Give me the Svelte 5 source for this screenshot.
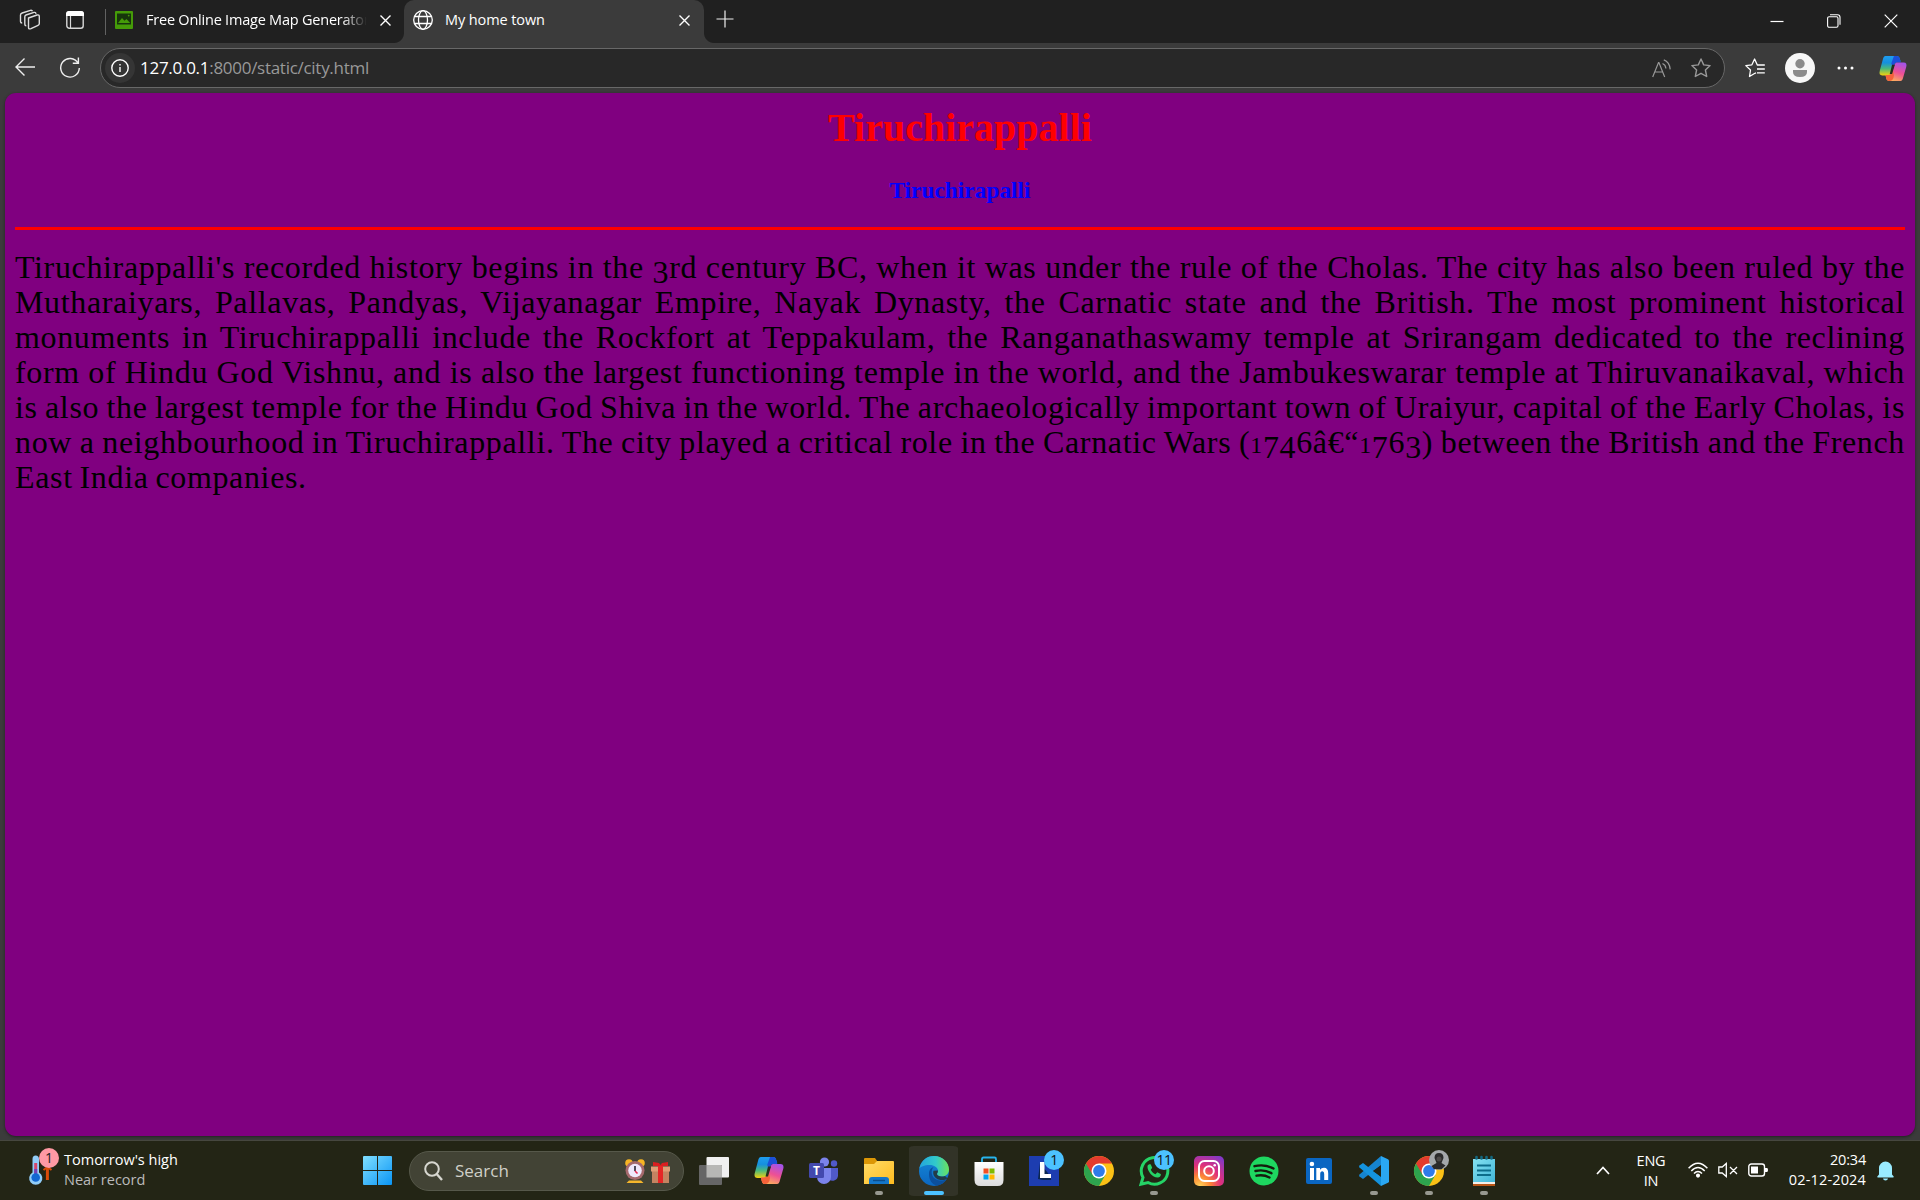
<script>
  const lines = [
    "Tiruchirappalli's recorded history begins in the 3rd century BC, when it was under the rule of the Cholas. The city has also been ruled by the",
    'Mutharaiyars, Pallavas, Pandyas, Vijayanagar Empire, Nayak Dynasty, the Carnatic state and the British. The most prominent historical',
    'monuments in Tiruchirappalli include the Rockfort at Teppakulam, the Ranganathaswamy temple at Srirangam dedicated to the reclining',
    'form of Hindu God Vishnu, and is also the largest functioning temple in the world, and the Jambukeswarar temple at Thiruvanaikaval, which',
    'is also the largest temple for the Hindu God Shiva in the world. The archaeologically important town of Uraiyur, capital of the Early Cholas, is',
    'now a neighbourhood in Tiruchirappalli. The city played a critical role in the Carnatic Wars (1746â€“1763) between the British and the French',
    'East India companies.'
  ];
  // Split digits out of each line so they can be set as old-style figures.
  const pieces = (line) => line.split(/(\d)/).filter((p) => p !== '');
  const figure = (p) => (p === '1' ? 'fig small' : /^[3457]$/.test(p) ? 'fig low' : 'fig');

  const apps = [
    { id: 'tasks' }, { id: 'copilot' }, { id: 'teams' }, { id: 'files', run: true },
    { id: 'edge', active: true }, { id: 'store' }, { id: 'l', badge: '1' }, { id: 'chrome' },
    { id: 'whatsapp', badge: '11', run: true }, { id: 'insta' }, { id: 'spotify' }, { id: 'linkedin' },
    { id: 'code', run: true }, { id: 'chrome2', run: true }, { id: 'notes', run: true }
  ];
</script>

<svelte:head><title>My home town</title></svelte:head>

{#snippet copilot()}
  <path d="M7 2h12c2 0 2.700 1 3.300 3l1 3h-3.500c-2 0-3 1-3.600 3l-2.800 9c-.7 2-1.600 3-3.600 3H3.500C.7 23 0 21 .8 18L4 6c.6-2.500 1.300-4 3-4z" transform="translate(0 -1)" fill="url(#cpA)" />
  <path d="M16 1h3c2 0 2.700 1 3.300 3l1 4h-3.500c-2 0-3 1-3.600 3l-1 3-2-5z" fill="#1c4fd8" />
  <path d="M23 28H11c-2 0-2.700-1-3.300-3L7 21.500h3.200c2 0 3-1 3.600-3l2.800-8C17.300 8.500 18.200 8 20 8h6.500c2.800 0 3.500 2 2.700 5L26 24c-.6 2.500-1.300 4-3 4z" fill="url(#cpB)" />
  <path d="M7 21.500h3.200c2 0 3-1 3.600-3l1-3L16 22c-.5 4-2 6-5 6-2 0-2.700-1-3.300-3z" fill="#f4623a" />
  <path d="M14 10.500h3l-3 10h-2.500z" fill="#24301d" />
{/snippet}

{#snippet chrome()}
  <circle cx="15" cy="15" r="15" fill="#fbc116" />
  <path d="M15 15 2 7.500A15 15 0 0 1 28 7.500H15z" fill="#e33b2e" />
  <path d="M2 7.500A15 15 0 0 0 15 30l6.500-11.200L15 15z" fill="#2da44e" />
  <path d="M2 7.500 8.500 18.800 15 7.500z" fill="#e33b2e" />
  <circle cx="15" cy="15" r="7.500" fill="#fff" />
  <circle cx="15" cy="15" r="5.900" fill="#2f7bea" />
{/snippet}

<svg class="defs" width="0" height="0" aria-hidden="true">
  <defs>
    <linearGradient id="cpA" x1="0" y1="0" x2="0" y2="1"><stop offset="0" stop-color="#1f9df0" /><stop offset=".35" stop-color="#1590df" /><stop offset=".65" stop-color="#4bb97a" /><stop offset="1" stop-color="#f5d10c" /></linearGradient>
    <linearGradient id="cpB" x1=".7" y1="0" x2=".3" y2="1"><stop offset="0" stop-color="#a453e8" /><stop offset=".5" stop-color="#ee5094" /><stop offset="1" stop-color="#fdb45a" /></linearGradient>
    <linearGradient id="win" x1="0" y1="0" x2="1" y2="1"><stop offset="0" stop-color="#80dfff" /><stop offset="1" stop-color="#0a95f5" /></linearGradient>
    <linearGradient id="fold" x1="0" y1="0" x2="1" y2="1"><stop offset="0" stop-color="#ffdc68" /><stop offset="1" stop-color="#ffbc1f" /></linearGradient>
    <linearGradient id="edA" x1="0" y1=".5" x2="1" y2=".5"><stop offset="0" stop-color="#24a5dd" /><stop offset=".55" stop-color="#31c9cb" /><stop offset="1" stop-color="#6be35b" /></linearGradient>
    <linearGradient id="edB" x1="0" y1="0" x2="0" y2="1"><stop offset="0" stop-color="#1689d8" /><stop offset="1" stop-color="#0b66c0" /></linearGradient>
    <radialGradient id="ig" cx=".2" cy="1" r="1.15"><stop offset="0" stop-color="#ffd35a" /><stop offset=".3" stop-color="#fc8434" /><stop offset=".6" stop-color="#e1307a" /><stop offset="1" stop-color="#8538c6" /></radialGradient>
    <linearGradient id="store" x1="0" y1="0" x2="0" y2="1"><stop offset="0" stop-color="#fff" /><stop offset="1" stop-color="#dcdcdc" /></linearGradient>
    <linearGradient id="note" x1="0" y1="0" x2="1" y2="1"><stop offset="0" stop-color="#86e2f2" /><stop offset="1" stop-color="#40b6d8" /></linearGradient>
  </defs>
</svg>

<div class="screen">
  <header class="tabs">
    <div class="lead">
      <svg width="22" height="22" viewBox="0 0 22 22" fill="none" stroke="#ddd" stroke-width="1.400" stroke-linejoin="round"><path d="m9.500 9 8.500-3q2.300-.6 2.300 1.500v7q0 1.400-1.300 1.900l-7 3.200q-2.500 1-2.500-1.200z" /><path d="M17 4.800q-.3-1.800-2-1.400L7 6q-1.200.4-1.200 1.800v7.500q0 1.500 1.500 1.500M13.500 2.300q-.6-1.500-2.100-1L3.200 4Q1.500 4.600 1.500 6v6.500Q1.500 14 3.200 14" /></svg>
      <svg width="18" height="18" viewBox="0 0 18 18"><rect x=".8" y=".8" width="16.400" height="16.400" rx="2.500" fill="none" stroke="#d8d8d8" stroke-width="1.400" /><path d="M0 5V3Q0 0 3 0h12q3 0 3 3v2z" fill="#fff" /><path d="M4.500 5v12" stroke="#d8d8d8" stroke-width="1.200" /></svg>
    </div>
    <div class="tab idle">
      <svg width="18" height="18" viewBox="0 0 18 18"><rect width="18" height="18" rx="1" fill="#459b08" /><path d="M2 2.500h14v11H2z" fill="#17350c" /><path d="m3 12 4-5 2.500 2.700L11.500 8l3.700 4z" fill="#459b08" /><circle cx="13.700" cy="4.600" r=".9" fill="#459b08" /></svg>
      <span class="label first">Free Online Image Map Generator</span>
      <svg class="x" width="11" height="11" viewBox="0 0 11 11"><path d="m.5.5 10 10m0-10-10 10" stroke="#fff" stroke-width="1.400" /></svg>
    </div>
    <div class="tab current">
      <svg width="20" height="20" viewBox="0 0 20 20" fill="none" stroke="#fff" stroke-width="1.300"><circle cx="10" cy="10" r="9.300" /><ellipse cx="10" cy="10" rx="4.500" ry="9.300" /><path d="M1.500 6.500h17m-17 7h17" /></svg>
      <span class="label second">My home town</span>
      <svg class="x" width="11" height="11" viewBox="0 0 11 11"><path d="m.5.5 10 10m0-10-10 10" stroke="#fff" stroke-width="1.400" /></svg>
    </div>
    <svg class="plus" width="18" height="18" viewBox="0 0 18 18"><path d="M9 .5v17M.5 9h17" stroke="#eee" stroke-width="1.200" /></svg>
    <div class="window">
      <svg width="14" height="14" viewBox="0 0 14 14"><path d="M.5 7.500h13" stroke="#fff" stroke-width="1.200" /></svg>
      <svg width="14" height="14" viewBox="0 0 14 14" fill="none" stroke="#fff" stroke-width="1.100"><rect x=".6" y="2.800" width="10.400" height="10.400" rx="1.500" /><path d="M3 .8h7.500q2.500 0 2.500 2.500v7.500" /></svg>
      <svg width="14" height="14" viewBox="0 0 14 14"><path d="m.7.7 12.600 12.600m0-12.600L.7 13.300" stroke="#fff" stroke-width="1.200" /></svg>
    </div>
  </header>

  <nav class="bar">
    <svg class="back" width="20" height="18" viewBox="0 0 20 18" fill="none" stroke="#eee" stroke-width="1.400"><path d="M20 9H1M9.500.5 1 9l8.500 8.500" /></svg>
    <svg class="reload" width="20" height="21" viewBox="0 0 20 21" fill="none" stroke="#eee" stroke-width="1.400"><path d="M19.300 11A9.300 9.300 0 1 1 18 6M12.800 6.300H18.400V.5" /></svg>
    <div class="address">
      <span class="info"><svg width="18" height="18" viewBox="0 0 18 18" fill="none" stroke="#fff" stroke-width="1.400"><circle cx="9" cy="9" r="8.200" /><path d="M9 8v5M9 5v1.500" /></svg></span>
      <span class="url"><b>127.0.0.1</b>:8000/static/city.html</span>
      <svg class="read" width="20" height="19" viewBox="0 0 20 19" fill="none" stroke="#999" stroke-width="1.200"><path d="M.7 18 6.500 3.500h.4L12.700 18M2.800 13h7.800M10.500 4.500q3.200 1.300 3.400 5M11.800.9q5.800 2.200 6.400 9.500" /></svg>
      <svg class="star" width="20" height="20" viewBox="0 0 20 20" fill="none" stroke="#999" stroke-width="1.400" stroke-linejoin="round"><path d="m10 1 2.700 5.900 6.400.7-4.700 4.400 1.300 6.500L10 15.300l-5.700 3.200 1.300-6.500L.9 7.600l6.400-.7z" /></svg>
    </div>
    <svg class="favs" width="20" height="20" viewBox="0 0 20 20" fill="none" stroke="#fff" stroke-width="1.300" stroke-linejoin="round"><path d="M11 14.800 9.500 15.500 4.500 18.500l1-6.500L.8 7.600l6.100-.8L9.600 1l2.700 6h7.500M12 11h7.800M12 14.800h7.800" /></svg>
    <svg class="avatar" width="30" height="30" viewBox="0 0 30 30"><circle cx="15" cy="15" r="15" fill="#f7f7f7" /><circle cx="15" cy="10.700" r="4.700" fill="#8b8b8b" /><path d="M8 17h14v2q0 5-7 5t-7-5z" fill="#8b8b8b" /></svg>
    <svg class="dots" width="18" height="4" viewBox="0 0 18 4" fill="#fff"><circle cx="2" cy="2" r="1.500" /><circle cx="8.500" cy="2" r="1.500" /><circle cx="15" cy="2" r="1.500" /></svg>
    <svg class="cp" width="28" height="27" viewBox="0 0 30 29">{@render copilot()}</svg>
  </nav>

  <main>
    <article>
      <h1>Tiruchirappalli</h1>
      <h3>Tiruchirapalli</h3>
      <hr />
      <p>
        {#each lines as line, i}
          <span class="line" class:last={i === lines.length - 1}>{#each pieces(line) as p}{#if /^\d$/.test(p)}<span class={figure(p)}>{p}</span>{:else}{p}{/if}{/each}</span>
        {/each}
      </p>
    </article>
  </main>

  <footer>
    <div class="weather">
      <svg width="31" height="38" viewBox="0 0 31 38"><path d="M3.500 11q0-3.500 3.200-3.500T10 11v13.500a6.600 6.600 0 1 1-6.500 0z" fill="#91cdf8" /><path d="M6.700 15v13" stroke="#d6466b" stroke-width="3" /><path d="M6.700 21v8" stroke="#7040b8" stroke-width="3" /><circle cx="6.700" cy="29.500" r="4.300" fill="#1267d2" /><path d="M18.400 19v13" stroke="#da4b08" stroke-width="3" /><path d="m14.500 22 4-3 4 3" fill="none" stroke="#da4b08" stroke-width="2" /><circle cx="20" cy="10" r="10" fill="#ff99a4" /><text x="20" y="15" text-anchor="middle" font-size="14" fill="#222">1</text></svg>
      <div class="report"><span>Tomorrow's high</span><span class="dim">Near record</span></div>
    </div>
    <svg class="start" width="29" height="29" viewBox="0 0 29 29"><path d="M1 0h13v14H0V1q0-1 1-1zM15 0h13q1 0 1 1v13H15zM0 15h14v14H1q-1 0-1-1zM15 15h14v13q0 1-1 1H15z" fill="url(#win)" /></svg>
    <div class="search">
      <svg width="19" height="20" viewBox="0 0 19 20" fill="none" stroke="#d7d7d0" stroke-width="2"><circle cx="8" cy="8" r="6.800" /><path d="m12.700 13 5.300 6" stroke-width="2.400" /></svg>
      <span>Search</span>
      <svg class="gift" width="45" height="26" viewBox="0 0 45 26">
        <path d="M4 22.500 1.500 25h17L16 22.500z" fill="#f5b62c" /><circle cx="4" cy="5" r="3.800" fill="#f7b524" /><circle cx="16" cy="5" r="3.800" fill="#f7b524" /><circle cx="10" cy="12.500" r="9.500" fill="#a5696d" /><circle cx="10" cy="12.500" r="6.800" fill="#efe8fc" /><path d="M10 8v5" stroke="#292536" stroke-width="1.600" /><path d="m10 13 2.500 2.500" stroke="#e82953" stroke-width="1.600" />
        <path d="M27 12h17v13H27z" fill="#c48361" /><path d="M26 8.500h19v5H26z" fill="#df9d76" /><path d="M33 7h5v18h-5z" fill="#e52626" /><path d="m28 4 6 1 1.500 2L37 5l6-1v4H28z" fill="#d91e20" />
      </svg>
    </div>
    <div class="apps">
      {#each apps as a}
        <div class="cell" class:active={a.active}>
          <svg width="30" height="30" viewBox="0 0 30 30">
            {#if a.id === 'tasks'}
              <rect x="7.500" y="1" width="22.500" height="20.500" rx="1" fill="#f0f0f0" /><rect y="9" width="23" height="20" rx="1" fill="#666" /><path d="M7.500 9H22q1 0 1 1v11.500H7.500z" fill="#b7b7b5" />
            {:else if a.id === 'copilot'}
              {@render copilot()}
            {:else if a.id === 'teams'}
              <circle cx="15.500" cy="6" r="4.600" fill="#7b83eb" /><circle cx="25" cy="7.500" r="3.200" fill="#5059c9" /><path d="M20 12h9v7.500a5.500 5.500 0 0 1-9 4z" fill="#5059c9" /><path d="M8 12h14v9a7 7 0 0 1-14 0z" fill="#7b83eb" /><rect y="7" width="15" height="15" rx="1.500" fill="#4349ae" /><text x="7.500" y="19" text-anchor="middle" font-size="12" font-weight="700" fill="#fff">T</text>
            {:else if a.id === 'files'}
              <path d="M0 3q0-1 1-1h10l2.500 3.500L11 9H0z" fill="#dc9706" /><path d="M0 8h10l3-3h16q1 0 1 1v22H0z" fill="url(#fold)" /><path d="M5 28v-4q0-3 3-3h14q3 0 3 3v4z" fill="#1476c9" /><path d="M9 24.500h12" stroke="#0a4c8c" stroke-width="1.400" />
            {:else if a.id === 'edge'}
              <circle cx="15" cy="15" r="15" fill="url(#edB)" /><path d="M.3 12.500C2 4.500 8 0 15 0c9 0 15 6.500 15 13.500 0 4-3 7-7 7-3 0-5-1.300-5-2.500 0-.8 1-1.300 1-3.200 0-3.300-4-5.800-8.300-5.800C5 9 1.500 11 .3 12.500z" fill="url(#edA)" /><path d="M10 18c0-4 2-6.500 4.500-6.500-3 2-3.200 12 6.500 13 3 .3 5.300-.7 7-1.500A15 15 0 0 1 18 29.700C13 28.500 10 24 10 18z" fill="#0b4f9d" /><path d="M19 14.500c0 2-1 2.500-1 3.500 0 1.300 2 2.500 5 2.500 1 0 2-.2 3-.6l2.500 2.300c-2 1.600-5 2.300-8 1.600-5-1.200-7.200-5.500-6-9z" fill="#292a1e" opacity=".75" />
            {:else if a.id === 'store'}
              <path d="M8 7V3q0-1.500 1.500-1.500h11Q22 1.500 22 3v4" fill="none" stroke="#27b4ec" stroke-width="1.800" /><path d="M.5 6h29v18q0 6-6 6h-17q-6 0-6-6z" fill="url(#store)" /><path d="M9.500 12.500h5v5h-5z" fill="#f25022" /><path d="M15.500 12.500h5v5h-5z" fill="#7fba00" /><path d="M9.500 18.500h5v5h-5z" fill="#00a4ef" /><path d="M15.500 18.500h5v5h-5z" fill="#ffb900" />
            {:else if a.id === 'l'}
              <path d="M0 0h30v30H0z" fill="#1d3db0" /><path d="m11 7-2 16 5 1h8v-3z" fill="#0b2750" /><path d="M11 6h4.500v12H22v4H11z" fill="#fff" />
            {:else if a.id === 'chrome'}
              {@render chrome()}
            {:else if a.id === 'whatsapp'}
              <path d="M2 28.200 4 21.500A13.300 13.300 0 1 1 9 26.500z" fill="none" stroke="#25d366" stroke-width="3" /><path d="M8.500 10c.5-1.700 2.500-2.300 3.300-1.500l1.400 3.200-1.400 2c1 2 2.500 3.500 4.700 4.500l1.800-2 3.400 1.700c.7 1.500-1.200 3.600-3.200 3.700C13.500 21.500 8 15 8.500 10z" fill="#25d366" />
            {:else if a.id === 'insta'}
              <rect width="30" height="30" rx="5" fill="url(#ig)" /><rect x="5" y="5" width="20" height="20" rx="5.500" fill="none" stroke="#fff" stroke-width="2" /><circle cx="15" cy="15" r="4.800" fill="none" stroke="#fff" stroke-width="2" /><circle cx="20.700" cy="9.300" r="1.300" fill="#fff" />
            {:else if a.id === 'spotify'}
              <circle cx="15" cy="15" r="14.500" fill="#1ed760" /><path d="M5.500 10.200q10-2.500 19 2.300M6.500 15q8.500-2 16 2.200M7.500 19.700q7-1.500 13 1.800" fill="none" stroke="#151d0d" stroke-width="2.400" stroke-linecap="round" />
            {:else if a.id === 'linkedin'}
              <rect x="2" y="2" width="26" height="26" rx="2" fill="#0a66c2" /><circle cx="7.900" cy="8" r="2.300" fill="#fff" /><path d="M6 12h4v12H6zM12.300 12H16v1.700q1.300-2 4-2 4.200 0 4.200 5.500V24h-4v-6q0-2.800-1.800-2.800-2.200 0-2.200 2.800v6h-3.900z" fill="#fff" />
            {:else if a.id === 'code'}
              <path d="m22 0 2 7.500L4 23 .5 20.500q-.9-1 0-2z" fill="#1684cf" /><path d="m22 30 2-7.500L4 7 .5 9.500q-.9 1 0 2z" fill="#1493df" /><path d="m22 0 7 3.200q1 .5 1 1.600v20.400q0 1.100-1 1.600L22 30z" fill="#2aa7f2" /><path d="M22 9.500 14 15l8 5.500z" fill="#222416" />
            {:else if a.id === 'chrome2'}
              {@render chrome()}
            {:else}
              <path d="M4 25h22v5H4z" fill="#b95516" /><path d="M4 25h22v3H4z" fill="#f4eee7" /><path d="M4 3h22v23H4z" fill="url(#note)" /><path d="M8 9.500h14M8 14.500h14M8 19h14" stroke="#0c6d8b" stroke-width="1.900" /><path d="M7.500 1v1.500M12.500 1v1.500M17.500 1v1.500M22.500 1v1.500" stroke="#126880" stroke-width="2.600" stroke-linecap="round" />
            {/if}
          </svg>
          {#if a.badge}<span class="badge">{a.badge}</span>{/if}
          {#if a.id === 'chrome2'}
            <svg class="badge" width="20" height="20" viewBox="0 0 20 20"><circle cx="10" cy="10" r="10" fill="#a4a8aa" /><path d="M5.500 8q0-5 4.500-5t4.500 5l-2 5 4 2.500-4 3.800H5L2.500 16l5-3z" fill="#2b2b2b" /><circle cx="10" cy="9" r="2.500" fill="#4c4947" /></svg>
          {/if}
          {#if a.run || a.active}<span class="mark"></span>{/if}
        </div>
      {/each}
    </div>
    <div class="tray">
      <svg class="up" width="14" height="9" viewBox="0 0 14 9"><path d="m1 8 6-6.500L13 8" fill="none" stroke="#fff" stroke-width="1.700" /></svg>
      <div class="lang"><span>ENG</span><span>IN</span></div>
      <svg class="wifi" width="20" height="16" viewBox="0 0 20 16" fill="none" stroke="#fff" stroke-width="1.500"><path d="M.6 6.300q9.400-10 18.800 0M3.300 8.900q6.700-7 13.400 0M6 11.500q4-4.200 8 0" /><circle cx="10" cy="13.600" r="1.300" fill="#fff" /></svg>
      <svg class="sound" width="20" height="16" viewBox="0 0 20 16" fill="none" stroke="#fff" stroke-width="1.300"><path d="M.8 5h3.400L8.300 1.500v13L4.200 11H.8zM12 5l7 7m0-7-7 7" /></svg>
      <svg class="battery" width="20" height="14" viewBox="0 0 20 14"><rect x=".8" y="1" width="15.700" height="12" rx="2.500" fill="none" stroke="#fff" stroke-width="1.400" /><path d="M3 3.500h7v7H3zM17 5h2q1 0 1 2t-1 2h-2z" fill="#fff" /></svg>
      <div class="clock"><span>20:34</span><span class="date">02-12-2024</span></div>
      <svg class="bell" width="17" height="20" viewBox="0 0 17 20" fill="#99ebff"><path d="M2 13.500V7a6.500 6.500 0 0 1 13 0v6.500l1.700 2q.3 1-.7 1H1q-1 0-.7-1zM6 17.500h5q-.3 2-2.500 2T6 17.500z" /></svg>
    </div>
  </footer>
</div>

<style>
  :global(body) { margin: 0; background: #3b3b3b; }
  svg { display: block; flex: none; overflow: visible; }
  .defs { position: absolute; }
  .screen { width: 1920px; height: 1200px; display: flex; flex-direction: column; overflow: hidden; background: #3b3b3b; color: #fff; font: 15px/20px 'Open Sans', 'Noto Sans', sans-serif; }
  .tabs { height: 43px; display: flex; flex: none; background: #202020; }
  .lead { width: 105px; box-sizing: border-box; padding: 9px 0 0 19px; display: flex; gap: 25px; }
  .lead svg:last-child { margin-top: 2px; }
  .tab { display: flex; align-items: flex-start; box-sizing: border-box; }
  .idle { width: 299px; padding: 11px 13px 0 10px; background: linear-gradient(#626262, #626262) 0 9px / 1px 26px no-repeat; }
  .current { width: 300px; padding: 10px 14px 0 9px; background: #3b3b3b; border-radius: 10px 10px 0 0; position: relative; }
  .current::before, .current::after { content: ''; position: absolute; bottom: 0; width: 10px; height: 10px; }
  .current::before { left: -10px; background: radial-gradient(circle at 0 0, transparent 9.500px, #3b3b3b 10.500px); }
  .current::after { right: -10px; background: radial-gradient(circle at 100% 0, transparent 9.500px, #3b3b3b 10.500px); }
  .label { white-space: nowrap; overflow: hidden; font-size: 14.500px; }
  .first { margin: -1px 0 0 13px; width: 223px; letter-spacing: -.22px; mask-image: linear-gradient(90deg, #000 88%, transparent 99%); }
  .second { margin: 0 0 0 12px; letter-spacing: -.1px; }
  .x { margin: 4px 0 0 auto; }
  .current .x { margin-top: 5px; }
  .plus { margin: 10px 0 0 12px; }
  .window { margin-left: auto; display: flex; gap: 43px; padding: 14px 22px 0 0; }
  .bar { height: 50px; flex: none; display: flex; align-items: center; box-sizing: border-box; padding: 0 13px 0 15px; }
  .back { margin-top: -2px; }
  .reload { margin-left: 25px; margin-top: -2px; }
  .address { margin-left: 20px; width: 1625px; height: 40px; box-sizing: border-box; border: 1px solid #686868; border-radius: 20px; background: #282828; display: flex; align-items: center; padding: 0 13px 0 4px; }
  .info { width: 30px; height: 30px; display: grid; place-items: center; border-radius: 50%; background: #353535; }
  .url { margin-left: 5px; font-size: 17px; letter-spacing: -.28px; color: #999; white-space: nowrap; }
  .url b { color: #fff; font-weight: 400; }
  .read { margin-left: auto; }
  .star { margin-left: 19px; }
  .favs { margin-left: 20px; }
  .avatar { margin-left: 20px; }
  .dots { margin-left: 22px; }
  .cp { margin-left: auto; }
  main { height: 1047px; flex: none; padding: 0 5px; box-sizing: border-box; }
  article { height: 1043px; box-sizing: border-box; background: #800080; border-radius: 11px; padding: 12px 10px 0; font-family: 'Liberation Serif', serif; box-shadow: 0 1px 3px #222; color: #000; }
  h1 { margin: 0; text-align: center; color: red; font-size: 40px; line-height: 46px; }
  h3 { margin: 25px 0 0; text-align: center; color: blue; font-size: 23.400px; line-height: 28px; }
  hr { margin: 23px 0 0; border: 0; height: 3px; background: red; }
  p { margin: 20px 0 0; font-size: 32px; line-height: 35px; letter-spacing: .65px; word-spacing: -1.800px; }
  .line { display: block; height: 35px; white-space: nowrap; text-align: justify; text-align-last: justify; }
  .last { text-align-last: left; }
  .fig { line-height: 0; }
  .small { font-size: 24px; }
  .low { position: relative; top: 5px; }
  footer { height: 60px; flex: none; box-sizing: border-box; display: flex; align-items: center; border-top: 1px solid #46473f; background: #232515; }
  .weather { width: 363px; display: flex; align-items: center; box-sizing: border-box; padding: 0 0 7px 29px; }
  .report { display: flex; flex-direction: column; margin: 6px 0 0 4px; font-size: 14.500px; }
  .dim { color: #bbb; }
  .search { margin-left: 17px; width: 275px; height: 40px; box-sizing: border-box; border-radius: 20px; border: 1px solid #56584a; background: #424335; display: flex; align-items: center; padding: 0 13px 0 14px; color: #d0d0c8; }
  .search span { margin-left: 12px; font-size: 17px; }
  .gift { margin-left: auto; }
  .apps { display: flex; margin-left: 2px; }
  .cell { width: 55px; height: 50px; display: grid; place-items: center; position: relative; }
  .active { background: linear-gradient(#323327, #323327) center / 49px 50px no-repeat; border-radius: 8px; }
  .badge { position: absolute; left: 28px; top: 4px; width: 20px; height: 20px; border-radius: 50%; font-size: 14px; text-align: center; letter-spacing: -.6px; }
  span.badge { background: #4cc2ff; color: #111; }
  .mark { position: absolute; left: 24px; bottom: 1px; width: 8px; height: 4px; border-radius: 2px; background: #989990; }
  .active .mark { left: 18px; width: 20px; background: #4cc2ff; }
  .tray { margin-left: auto; padding-right: 26px; display: flex; align-items: center; }
  .up { margin-top: -1px; }
  .lang { display: flex; flex-direction: column; text-align: center; width: 30px; margin-left: 26px; font-size: 14.500px; letter-spacing: -.2px; }
  .wifi { margin-left: 22px; margin-top: -2px; }
  .sound { margin-left: 10px; margin-top: -1px; }
  .battery { margin-left: 10px; margin-top: -1px; }
  .clock { width: 90px; display: flex; flex-direction: column; text-align: right; margin: -2px 0 0 8px; font-size: 14.500px; letter-spacing: -.2px; }
  .date { letter-spacing: .15px; }
  .bell { margin-left: 11px; }
</style>
